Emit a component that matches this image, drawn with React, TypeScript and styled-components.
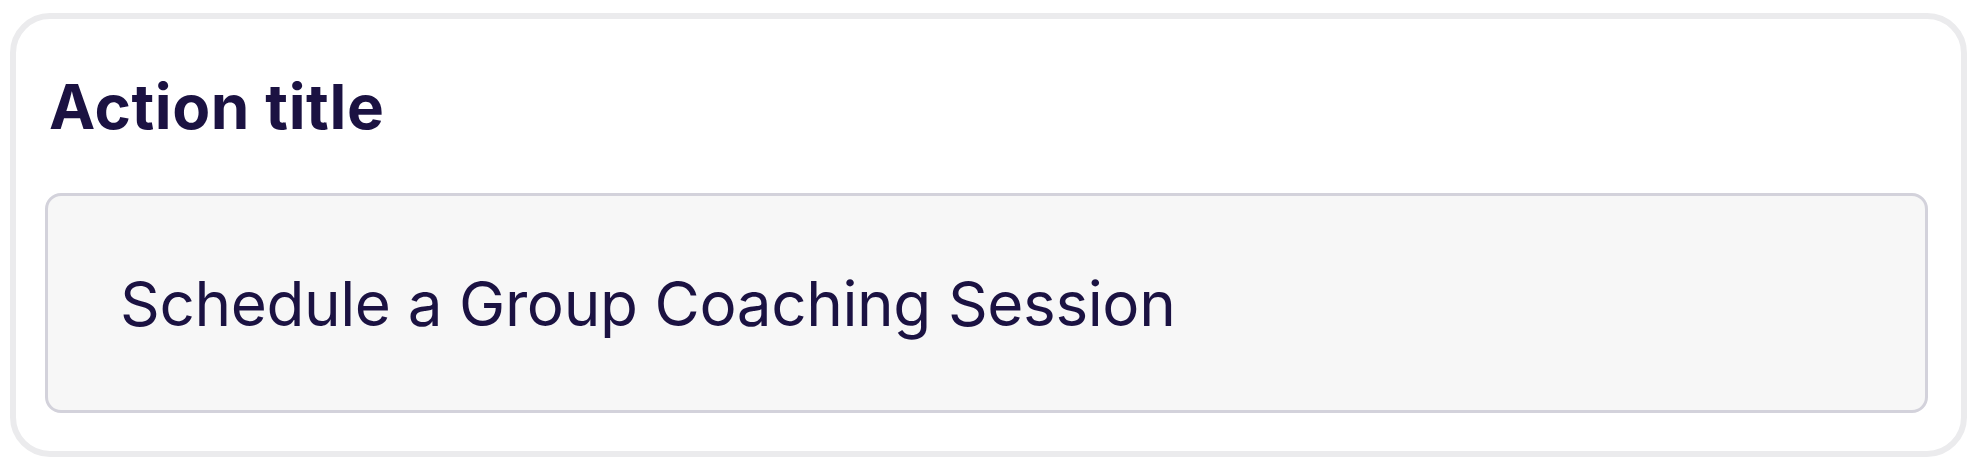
import styled, { createGlobalStyle } from 'styled-components';

const GlobalStyle = createGlobalStyle`
    html, body {
        margin: 0;
        padding: 0;
        background: #ffffff;
    }
    body {
        font-family: Inter, 'Liberation Sans', sans-serif;
        font-variant-ligatures: none;
        color: #1b1242;
    }
`;

const Page = styled.div`
    padding: 13px 17px 0 10px;
`;

const Card = styled.section`
    height: 444px;
    box-sizing: border-box;
    border: 6px solid #ebebed;
    border-radius: 40px;
    background: #fff;
    padding: 0 33px 38px 29px;
    display: flex;
    flex-direction: column;
`;

const Title = styled.h2`
    margin: 0;
    padding: 53px 0 0 4px;
    font-size: 62px;
    line-height: 70px;
    font-weight: 700;
    letter-spacing: 0.6px;
    color: #1b1242;
`;

const Field = styled.div`
    margin-top: auto;
    height: 220px;
    box-sizing: border-box;
    border: 3px solid #d3d2db;
    border-radius: 16px;
    background: #f7f7f7;
    display: flex;
    align-items: center;
    padding: 0 72px;
`;

const Value = styled.span`
    font-size: 62px;
    font-weight: 400;
    letter-spacing: -0.4px;
    color: #1b1242;
`;

export default function App() {
    return (
        <>
            <GlobalStyle />
            <Page>
                <Card>
                    <Title>Action title</Title>
                    <Field>
                        <Value>Schedule a Group Coaching Session</Value>
                    </Field>
                </Card>
            </Page>
        </>
    );
}
